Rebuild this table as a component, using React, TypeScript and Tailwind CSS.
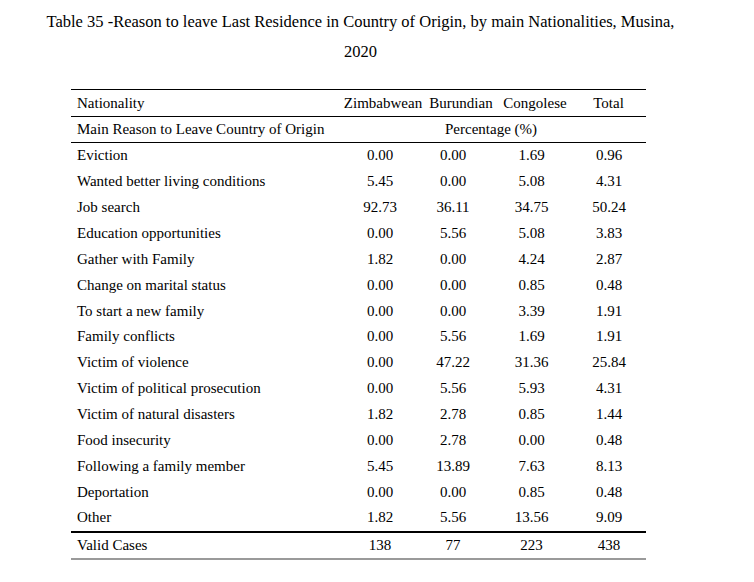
import React from "react"

type Row = { label: string; zim: string; bur: string; con: string; total: string }

const rows: Row[] = [
  { label: "Eviction", zim: "0.00", bur: "0.00", con: "1.69", total: "0.96" },
  { label: "Wanted better living conditions", zim: "5.45", bur: "0.00", con: "5.08", total: "4.31" },
  { label: "Job search", zim: "92.73", bur: "36.11", con: "34.75", total: "50.24" },
  { label: "Education opportunities", zim: "0.00", bur: "5.56", con: "5.08", total: "3.83" },
  { label: "Gather with Family", zim: "1.82", bur: "0.00", con: "4.24", total: "2.87" },
  { label: "Change on marital status", zim: "0.00", bur: "0.00", con: "0.85", total: "0.48" },
  { label: "To start a new family", zim: "0.00", bur: "0.00", con: "3.39", total: "1.91" },
  { label: "Family conflicts", zim: "0.00", bur: "5.56", con: "1.69", total: "1.91" },
  { label: "Victim of violence", zim: "0.00", bur: "47.22", con: "31.36", total: "25.84" },
  { label: "Victim of political prosecution", zim: "0.00", bur: "5.56", con: "5.93", total: "4.31" },
  { label: "Victim of natural disasters", zim: "1.82", bur: "2.78", con: "0.85", total: "1.44" },
  { label: "Food insecurity", zim: "0.00", bur: "2.78", con: "0.00", total: "0.48" },
  { label: "Following a family member", zim: "5.45", bur: "13.89", con: "7.63", total: "8.13" },
  { label: "Deportation", zim: "0.00", bur: "0.00", con: "0.85", total: "0.48" },
  { label: "Other", zim: "1.82", bur: "5.56", con: "13.56", total: "9.09" },
]

// header grid: label | Zimbabwean | Burundian | Congolese | Total
const headCols = "grid grid-cols-[272px_80px_76px_72px_75px] items-center"
// value grid (numbers sit a bit left of their headings)
const valCols = "grid grid-cols-[271px_76px_70px_87px_68px] items-center"

function DataRow({ row }: { row: Row }) {
  return (
    <div className={`${valCols} h-[25.87px]`}>
      <span className="pl-[6px] whitespace-nowrap">{row.label}</span>
      <span className="text-center">{row.zim}</span>
      <span className="text-center">{row.bur}</span>
      <span className="text-center">{row.con}</span>
      <span className="text-center">{row.total}</span>
    </div>
  )
}

export default function App() {
  return (
    <div className="w-[754px] h-[582px] bg-white text-black font-['Liberation_Serif',serif] overflow-hidden">
      {/* Title */}
      <div className="pt-[7px] pl-[45px] w-[676px] text-center text-[16.5px] leading-[30px] whitespace-nowrap">
        <p>Table 35 -Reason to leave Last Residence in Country of Origin, by main Nationalities, Musina,</p>
        <p>2020</p>
      </div>

      {/* Table */}
      <div className="mt-[22px] ml-[71px] w-[575px] text-[15px] leading-none">
        <div className="border-t border-black">
          <div className={`${headCols} h-[26px]`}>
            <span className="pl-[6px]">Nationality</span>
            <span className="text-center whitespace-nowrap">Zimbabwean</span>
            <span className="text-center whitespace-nowrap">Burundian</span>
            <span className="text-center whitespace-nowrap">Congolese</span>
            <span className="text-center">Total</span>
          </div>
        </div>
        <div className="border-t border-black">
          <div className={`${headCols} h-[25px]`}>
            <span className="pl-[6px] whitespace-nowrap">Main Reason to Leave Country of Origin</span>
            <span className="col-span-4 pl-[102px] whitespace-nowrap">Percentage (%)</span>
          </div>
        </div>
        <div className="border-t border-black">
          {rows.map((row) => (
            <DataRow key={row.label} row={row} />
          ))}
        </div>
        <div className="border-t-2 border-black border-b-2 border-b-[#9a9a9a]">
          <div className={`${valCols} h-[25px]`}>
            <span className="pl-[6px]">Valid Cases</span>
            <span className="text-center">138</span>
            <span className="text-center">77</span>
            <span className="text-center">223</span>
            <span className="text-center">438</span>
          </div>
        </div>
      </div>
    </div>
  )
}
